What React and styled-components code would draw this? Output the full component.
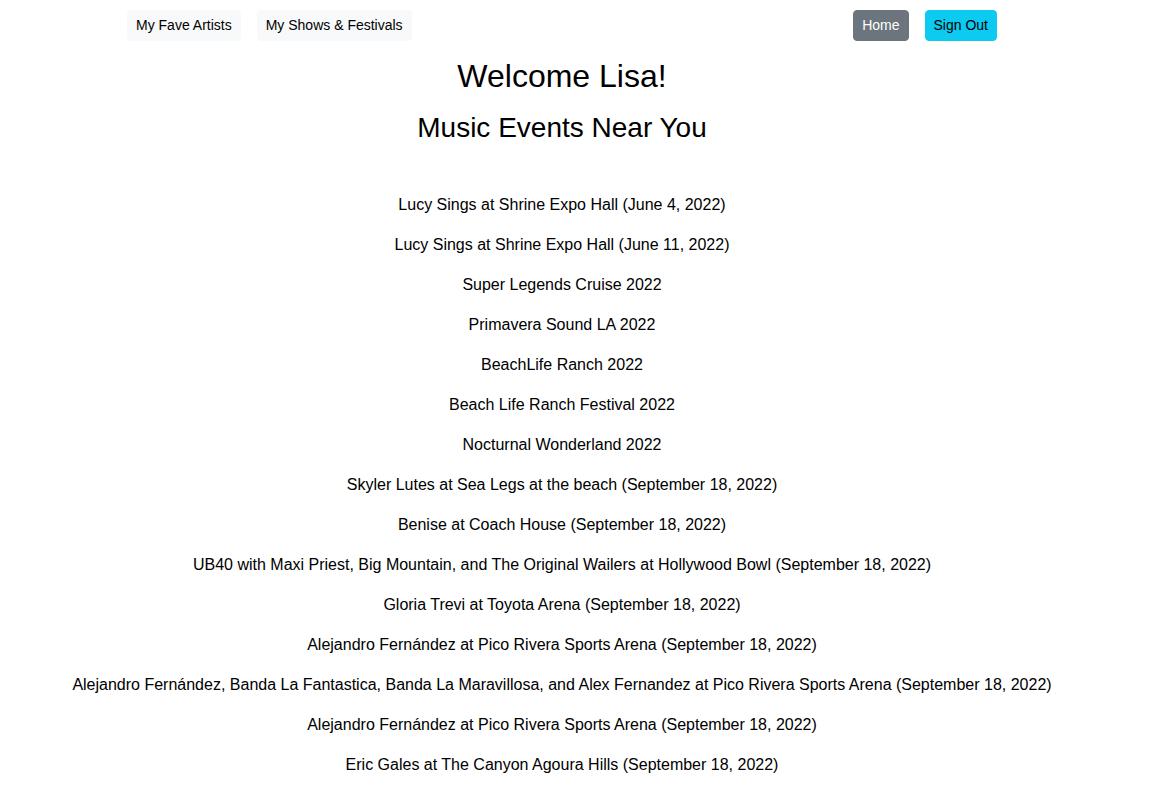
import React from 'react';
import styled, { createGlobalStyle } from 'styled-components';

const GlobalStyle = createGlobalStyle`
  body {
    margin: 0;
    background: #fff;
    color: #212529;
    font-family: "Liberation Sans", Arial, sans-serif;
  }
`;

const Page = styled.div`
  width: 1124px;
`;

const NavBar = styled.nav`
  width: 870px;
  margin: 0 auto;
  padding-top: 10px;
  display: flex;
  justify-content: space-between;
  align-items: center;
`;

const NavGroup = styled.div`
  display: flex;
  gap: 16px;
`;

const NavButton = styled.button`
  font-family: inherit;
  font-size: 14px;
  line-height: 21px;
  padding: 4px 8px;
  border: 1px solid ${p => p.$bg};
  border-radius: 4px;
  background: ${p => p.$bg};
  color: ${p => p.$color || '#000'};
  cursor: pointer;
`;

const Title = styled.h1`
  margin: 16px 0 0;
  font-size: 32px;
  font-weight: 400;
  line-height: 38px;
  text-align: center;
  color: #000;
`;

const Subtitle = styled.h2`
  margin: 16px 0 0;
  font-size: 28px;
  font-weight: 400;
  line-height: 34px;
  text-align: center;
  color: #000;
`;

const EventList = styled.div`
  margin-top: 48px;
  text-align: center;
`;

const EventItem = styled.p`
  margin: 0 0 16px;
  font-size: 16px;
  line-height: 24px;
  color: #000;
`;

const events = [
  'Lucy Sings at Shrine Expo Hall (June 4, 2022)',
  'Lucy Sings at Shrine Expo Hall (June 11, 2022)',
  'Super Legends Cruise 2022',
  'Primavera Sound LA 2022',
  'BeachLife Ranch 2022',
  'Beach Life Ranch Festival 2022',
  'Nocturnal Wonderland 2022',
  'Skyler Lutes at Sea Legs at the beach (September 18, 2022)',
  'Benise at Coach House (September 18, 2022)',
  'UB40 with Maxi Priest, Big Mountain, and The Original Wailers at Hollywood Bowl (September 18, 2022)',
  'Gloria Trevi at Toyota Arena (September 18, 2022)',
  'Alejandro Fernández at Pico Rivera Sports Arena (September 18, 2022)',
  'Alejandro Fernández, Banda La Fantastica, Banda La Maravillosa, and Alex Fernandez at Pico Rivera Sports Arena (September 18, 2022)',
  'Alejandro Fernández at Pico Rivera Sports Arena (September 18, 2022)',
  'Eric Gales at The Canyon Agoura Hills (September 18, 2022)',
];

export default function App() {
  return (
    <Page>
      <GlobalStyle />
      <NavBar>
        <NavGroup>
          <NavButton $bg="#f8f9fa">My Fave Artists</NavButton>
          <NavButton $bg="#f8f9fa">My Shows &amp; Festivals</NavButton>
        </NavGroup>
        <NavGroup>
          <NavButton $bg="#6c757d" $color="#fff">Home</NavButton>
          <NavButton $bg="#0dcaf0">Sign Out</NavButton>
        </NavGroup>
      </NavBar>
      <Title>Welcome Lisa!</Title>
      <Subtitle>Music Events Near You</Subtitle>
      <EventList>
        {events.map((e, i) => (
          <EventItem key={i}>{e}</EventItem>
        ))}
      </EventList>
    </Page>
  );
}
